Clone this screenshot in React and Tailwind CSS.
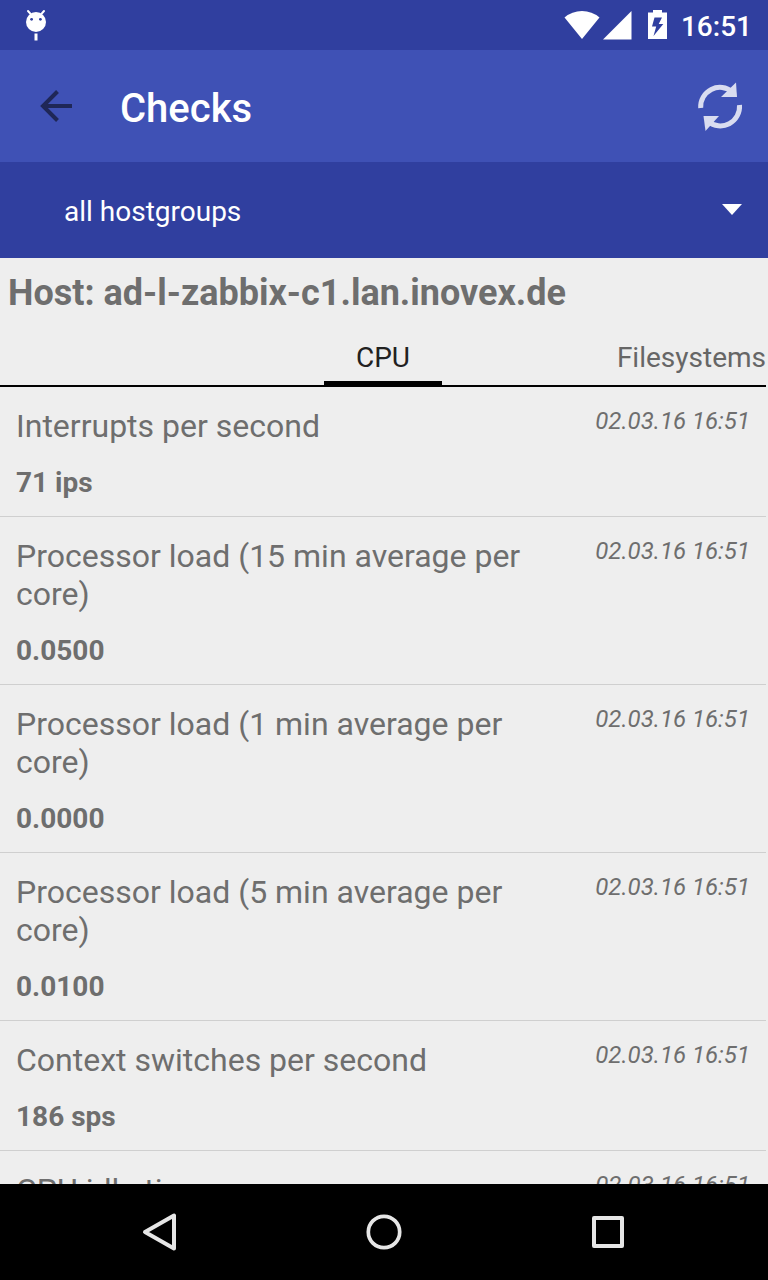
const checks = [
  { name: "Interrupts per second", value: "71 ips" },
  { name: "Processor load (15 min average per core)", value: "0.0500" },
  { name: "Processor load (1 min average per core)", value: "0.0000" },
  { name: "Processor load (5 min average per core)", value: "0.0100" },
  { name: "Context switches per second", value: "186 sps" },
  { name: "CPU idle time", value: "98.86 %" },
];

function StatusBar() {
  return (
    <div className="flex h-[50px] shrink-0 items-center justify-between bg-[#303f9f] pl-6 pr-4">
      <svg className="h-[50px] w-6" viewBox="0 0 24 50" aria-hidden="true">
        <path d="M4 11l3.2 3.6M20 11l-3.2 3.6" stroke="#fff" strokeWidth="2" strokeLinecap="round" />
        <circle cx="12" cy="22" r="10" fill="#fff" />
        <circle cx="7.6" cy="19.3" r="1.4" fill="#303f9f" />
        <circle cx="16.4" cy="19.3" r="1.4" fill="#303f9f" />
        <path d="M10.5 33.5h3v7h-3z" fill="#fff" />
      </svg>
      <div className="flex items-center">
        <svg className="h-[50px] w-[104px]" viewBox="564 0 104 50" fill="#fff" aria-hidden="true">
          <path d="M564.5 17.5Q572 11 582 11T599.500 17.500L582 39z" />
          <path d="M603 39.500L631.500 11v28.500z" />
          <path
            fillRule="evenodd"
            d="M648 12.500h5V10h9v2.500h5V39h-19zM654.500 17.500L652 26.500h4.200l-2.700 9.500 9.800-12h-4.600l3.300-6.500z"
          />
        </svg>
        <span className="ml-[13px] pt-1 text-[28px] leading-8 font-medium text-white">16:51</span>
      </div>
    </div>
  );
}

function Toolbar() {
  return (
    <header className="flex h-28 shrink-0 items-center justify-between bg-[#3f51b5] pl-8 pr-6">
      <div className="flex items-center gap-10">
        <button type="button" aria-label="Back" className="size-12">
          <svg viewBox="0 0 48 48" className="size-12" fill="none" stroke="#1f2757" strokeWidth="4">
            <path d="M40 24H11M25.500 9.500L11 24l14.500 14.500" />
          </svg>
        </button>
        <h1 className="pt-1.5 text-[40px] leading-[48px] font-medium text-white">Checks</h1>
      </div>
      <button type="button" aria-label="Refresh" className="h-12 w-12">
        <svg viewBox="696 82 48 48" className="h-12 w-12 overflow-visible">
          <g fill="none" stroke="#d9dcf0" strokeWidth="5">
            <path d="M700.700 108A19.300 19.300 0 0 1 732.500 92" />
            <path d="M739.500 105A19.300 19.300 0 0 1 708 121.500" />
          </g>
          <path d="M736 82.500l1 14.500h-16z" fill="#d9dcf0" />
          <path d="M703.500 116h15.500l-13.500 15z" fill="#d9dcf0" />
        </svg>
      </button>
    </header>
  );
}

function HostgroupSelect() {
  return (
    <div className="relative h-24 shrink-0 bg-[#303f9f]">
      <select
        aria-label="Host group"
        className="h-full w-full appearance-none bg-transparent pl-16 pr-16 pt-1 text-[28px] text-white outline-none"
      >
        <option>all hostgroups</option>
      </select>
      <svg className="pointer-events-none absolute top-[42px] right-[26px] h-[11px] w-5" viewBox="0 0 20 11" aria-hidden="true">
        <path d="M0 0h20L10 11z" fill="#fff" />
      </svg>
    </div>
  );
}

function Tabs() {
  return (
    <div role="tablist" className="grid h-[59px] grid-cols-3 border-b-2 border-black">
      <button
        type="button"
        role="tab"
        aria-selected="true"
        className="col-start-2 justify-self-center border-b-4 border-black px-8 pt-1.5 text-[28px] text-[#212121]"
      >
        CPU
      </button>
      <button
        type="button"
        role="tab"
        aria-selected="false"
        className="justify-self-end border-b-4 border-transparent pt-1.5 text-[28px] text-[#666666]"
      >
        Filesystems
      </button>
    </div>
  );
}

function CheckRow({ name, value }) {
  return (
    <li className="flex items-start justify-between gap-8 border-b border-[#cfcfcf] px-4 pt-5 pb-[17px]">
      <div className="min-w-0 flex-1">
        <h3 className="text-[32px] leading-[38px]">{name}</h3>
        <p className="mt-[22px] text-[28px] leading-8 font-bold">{value}</p>
      </div>
      <time className="shrink-0 text-2xl leading-7 italic">02.03.16 16:51</time>
    </li>
  );
}

export default function App() {
  return (
    <div className="flex h-screen flex-col overflow-hidden bg-[#eeeeee] font-['Roboto',sans-serif]">
      <StatusBar />
      <Toolbar />
      <HostgroupSelect />
      <main className="min-h-0 flex-1 overflow-hidden pr-0.5 text-[#6e6e6e]">
        <h2 className="px-2 pt-3.5 pb-3.5 text-4xl leading-[42px] font-bold">Host: ad-l-zabbix-c1.lan.inovex.de</h2>
        <Tabs />
        <ul>
          {checks.map((check) => (
            <CheckRow key={check.name} {...check} />
          ))}
        </ul>
      </main>
      <nav aria-label="System" className="flex h-24 shrink-0 items-center justify-center gap-32 bg-black">
        <button type="button" aria-label="Back" className="size-24">
          <svg viewBox="0 0 96 96" className="size-24" fill="none" stroke="#e6e6e6" strokeWidth="4" strokeLinejoin="round">
            <path d="M62 31.500v33L33 48z" />
          </svg>
        </button>
        <button type="button" aria-label="Home" className="size-24">
          <svg viewBox="0 0 96 96" className="size-24" fill="none" stroke="#e6e6e6" strokeWidth="3.700">
            <circle cx="48" cy="48" r="15.700" />
          </svg>
        </button>
        <button type="button" aria-label="Overview" className="size-24">
          <svg viewBox="0 0 96 96" className="size-24" fill="none" stroke="#e6e6e6" strokeWidth="4" strokeLinejoin="round">
            <path d="M34 34h28v28H34z" />
          </svg>
        </button>
      </nav>
    </div>
  );
}
